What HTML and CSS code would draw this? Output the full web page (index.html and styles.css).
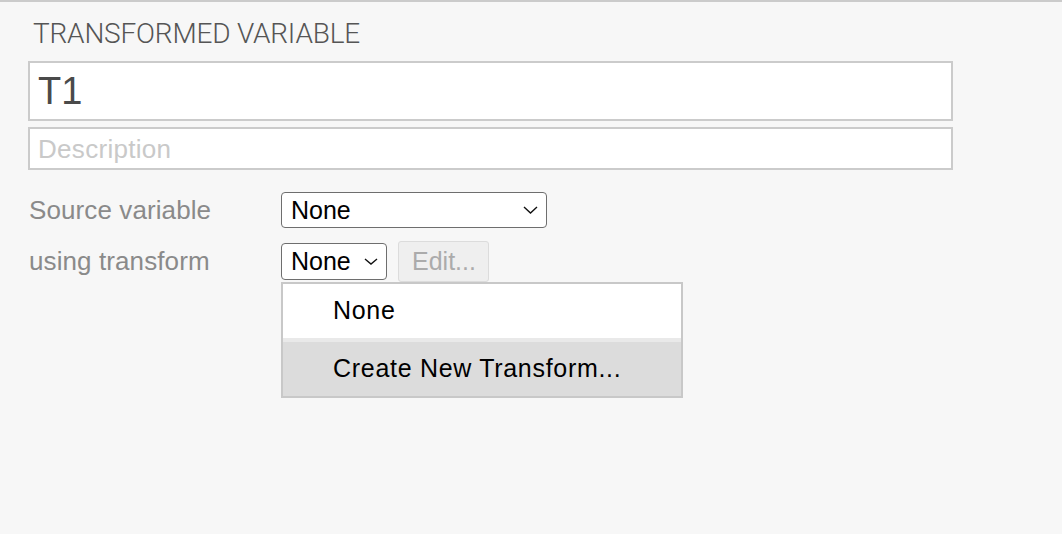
FILE: index.html
```html
<!DOCTYPE html>
<html>
<head>
<meta charset="utf-8">
<link rel="stylesheet" href="styles.css">
</head>
<body>
<div class="panel">
  <div class="title">TRANSFORMED VARIABLE</div>
  <div class="field name">T1</div>
  <div class="field desc">Description</div>
  <div class="row row-source">
    <div class="label">Source variable</div>
    <div class="select wide"><span>None</span><svg class="chev" width="15" height="8" viewBox="0 0 15 8"><polyline points="1,1 7.5,7 14,1" fill="none" stroke="#111" stroke-width="1.4"/></svg></div>
  </div>
  <div class="row row-transform">
    <div class="label">using transform</div>
    <div class="picker">
      <div class="select narrow"><span>None</span><svg class="chev" width="14" height="7" viewBox="0 0 14 7"><polyline points="1,1 7,6 13,1" fill="none" stroke="#111" stroke-width="1.4"/></svg></div>
      <div class="menu">
        <div class="item">None</div>
        <div class="item active">Create New Transform...</div>
      </div>
    </div>
    <div class="btn">Edit...</div>
  </div>
</div>
</body>
</html>
```

FILE: styles.css
```css
html, body {
  margin: 0;
  padding: 0;
  background: #f7f7f7;
  height: 100%;
}
body {
  border-top: 2px solid #cbcbcb;
  box-sizing: border-box;
  font-family: "Liberation Sans", Arial, sans-serif;
}
.panel {
  padding: 14px 0 0 28px;
}
.title {
  font-family: Roboto, "Liberation Sans", sans-serif;
  font-weight: 300;
  font-size: 28px;
  line-height: 36px;
  color: #555;
  padding-left: 5px;
  letter-spacing: -0.2px;
}
.field {
  width: 925px;
  box-sizing: border-box;
  border: 2px solid #cbcbcb;
  background: #fff;
  padding-left: 8px;
}
.name {
  margin-top: 9px;
  height: 60px;
  line-height: 56px;
  font-size: 38px;
  color: #4a4a4a;
}
.desc {
  margin-top: 6px;
  height: 43px;
  line-height: 40px;
  font-size: 26px;
  letter-spacing: 0.3px;
  color: #c9c9c9;
}
.row {
  display: flex;
  align-items: center;
}
.row-source {
  margin-top: 22px;
}
.row-transform {
  margin-top: 13px;
  align-items: flex-start;
}
.label {
  width: 253px;
  padding-left: 1px;
  box-sizing: border-box;
  font-size: 26px;
  letter-spacing: 0.1px;
  color: #8a8a8a;
}
.row-transform .label {
  line-height: 40px;
}
.select {
  display: flex;
  align-items: center;
  justify-content: space-between;
  box-sizing: border-box;
  border: 1px solid #6e6e6e;
  border-radius: 4px;
  background: #fff;
  font-size: 25px;
  color: #000;
  padding: 0 8px 0 9px;
}
.wide {
  width: 266px;
  height: 36px;
}
.narrow {
  width: 106px;
  height: 37px;
  margin-top: 2px;
}
.picker {
  position: relative;
}
.menu {
  position: absolute;
  top: 41px;
  left: 0;
  width: 402px;
  box-sizing: border-box;
  border: 2px solid #c8c8c8;
  background: #fff;
  z-index: 2;
}
.item {
  height: 54px;
  line-height: 52px;
  padding-left: 50px;
  font-size: 25px;
  letter-spacing: 0.7px;
  color: #000;
}
.item.active {
  background: #dcdcdc;
  border-top: 4px solid #e9e9e9;
}
.btn {
  margin-left: 11px;
  width: 91px;
  height: 41px;
  box-sizing: border-box;
  border: 1px solid #dcdcdc;
  border-radius: 3px;
  background: #efefef;
  color: #ababab;
  font-size: 25px;
  line-height: 38px;
  padding-left: 13px;
}
```
